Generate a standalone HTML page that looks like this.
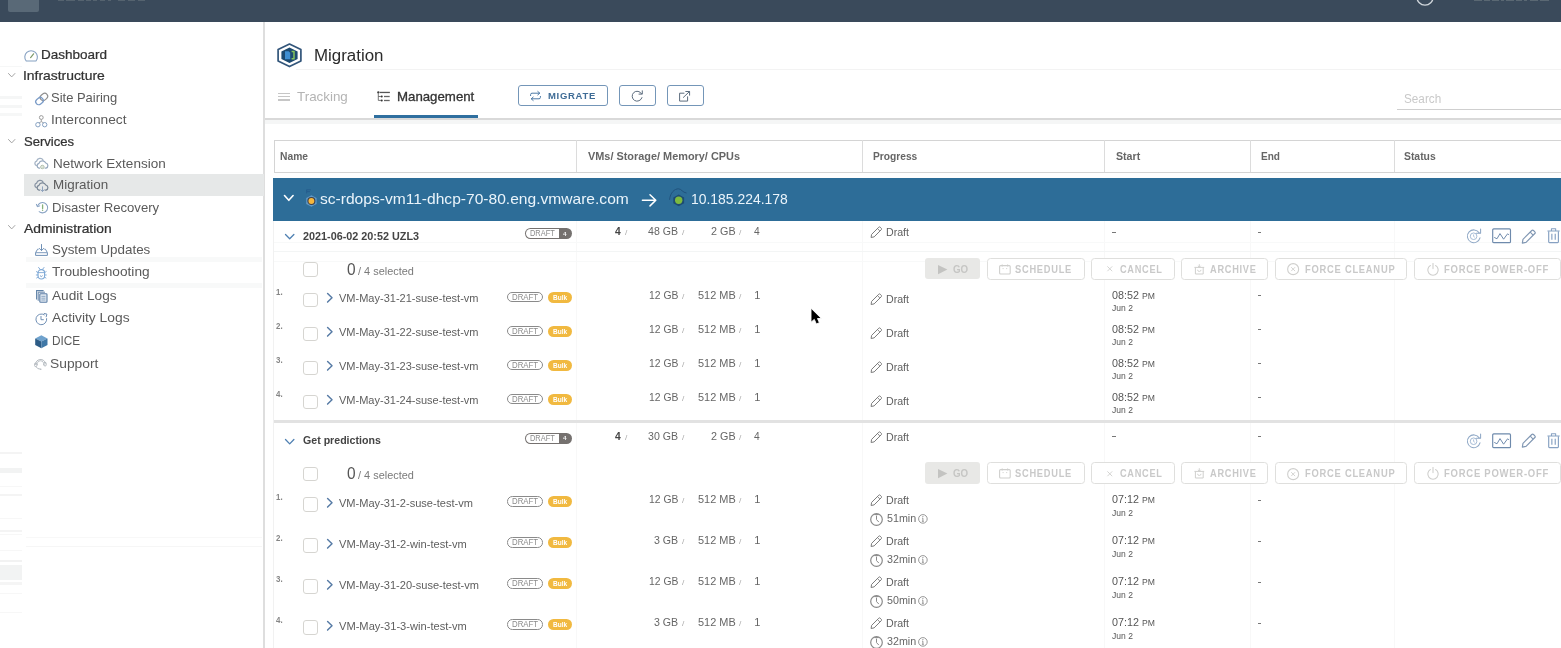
<!DOCTYPE html>
<html><head><meta charset="utf-8"><title>HCX Migration</title>
<style>
html,body{margin:0;padding:0;background:#fff;overflow:hidden;}
body{width:1561px;height:648px;overflow:hidden;position:relative;font-family:"Liberation Sans", sans-serif;}
.t{position:absolute;white-space:pre;transform-origin:0 0;font-family:"Liberation Sans", sans-serif;}
svg{overflow:visible}
#w{position:absolute;left:0;top:0;width:1561px;height:648px;overflow:hidden;will-change:transform;}
</style></head><body><div id="w">

<div style="position:absolute;left:1394px;top:221px;width:1px;height:427px;background:#f8f8f8"></div>
<div style="position:absolute;left:1250px;top:221px;width:1px;height:427px;background:#f8f8f8"></div>
<div style="position:absolute;left:1104px;top:221px;width:1px;height:427px;background:#f8f8f8"></div>
<div style="position:absolute;left:861.7px;top:221px;width:1px;height:427px;background:#f8f8f8"></div>
<div style="position:absolute;left:576px;top:221px;width:1px;height:427px;background:#f8f8f8"></div>
<div style="position:absolute;left:273.2px;top:221px;width:1px;height:427px;background:#f1f1f1"></div>
<div style="position:absolute;left:274px;top:260.6px;width:1287px;height:1px;background:#f8f9f9"></div>
<div style="position:absolute;left:274px;top:251.4px;width:1287px;height:1px;background:#f3f5f5"></div>
<div style="position:absolute;left:274px;top:241.6px;width:1287px;height:1px;background:#f8f9f9"></div>
<div style="position:absolute;left:26px;top:283.4px;width:236px;height:5.0px;background:#f8f9f9"></div>
<div style="position:absolute;left:26px;top:256.6px;width:236px;height:5.0px;background:#f8f9f9"></div>
<div style="position:absolute;left:26px;top:545.8px;width:236px;height:1.7px;background:#f6f6f6"></div>
<div style="position:absolute;left:26px;top:537.1px;width:236px;height:0.9px;background:#f8f8f8"></div>
<div style="position:absolute;left:0;top:611.5px;width:22px;height:0.9px;background:#f7f7f7"></div>
<div style="position:absolute;left:0;top:593px;width:22px;height:0.9px;background:#f7f7f7"></div>
<div style="position:absolute;left:0;top:581.8px;width:22px;height:2.9px;background:#f5f5f5"></div>
<div style="position:absolute;left:0;top:565.2px;width:22px;height:15.3px;background:#f2f3f3"></div>
<div style="position:absolute;left:0;top:559.9px;width:22px;height:2.1px;background:#f2f2f2"></div>
<div style="position:absolute;left:0;top:549.5px;width:22px;height:0.9px;background:#f7f7f7"></div>
<div style="position:absolute;left:0;top:533.8px;width:22px;height:0.9px;background:#f7f7f7"></div>
<div style="position:absolute;left:0;top:530px;width:22px;height:2.0px;background:#f4f4f4"></div>
<div style="position:absolute;left:0;top:517.7px;width:22px;height:0.9px;background:#f7f7f7"></div>
<div style="position:absolute;left:0;top:493.7px;width:22px;height:2.1px;background:#f4f4f4"></div>
<div style="position:absolute;left:0;top:485.9px;width:22px;height:0.9px;background:#f7f7f7"></div>
<div style="position:absolute;left:0;top:467.7px;width:22px;height:5.7px;background:#f2f3f3"></div>
<div style="position:absolute;left:0;top:452.4px;width:22px;height:2.0px;background:#f4f4f4"></div>
<div style="position:absolute;left:0;top:113px;width:22px;height:2.6px;background:#f6f7f7"></div>
<div style="position:absolute;left:0;top:105.4px;width:22px;height:2.6px;background:#f5f6f6"></div>
<div style="position:absolute;left:0;top:96.4px;width:22px;height:2.6px;background:#f5f6f6"></div>
<div style="position:absolute;left:0;top:65.6px;width:22px;height:1.4px;background:#f6f7f7"></div>
<div style="position:absolute;left:0px;top:0px;width:1561px;height:21.5px;background:#3a4a5b;"></div>
<div style="position:absolute;left:8px;top:0px;width:31px;height:12px;background:#596977;border-radius:0 0 2px 2px;"></div>
<div style="position:absolute;left:263px;top:21.5px;width:2px;height:627px;background:#dedede;"></div>
<div style="position:absolute;left:23.5px;top:173.8px;width:240px;height:22.4px;background:#e6e8e8;"></div>
<div style="position:absolute;left:296px;top:69px;width:1265px;height:1px;background:#f3f3f3;"></div>
<div style="position:absolute;left:374.2px;top:114.8px;width:103.5px;height:3.2px;background:#2f6f9f;"></div>
<div style="position:absolute;left:265px;top:117.6px;width:1296px;height:2.2px;background:#d9d9d9;"></div>
<div style="position:absolute;left:265px;top:119.8px;width:1296px;height:4px;background:#f5f6f6;"></div>
<div style="position:absolute;left:518px;top:84.6px;width:89.6px;height:21.2px;background:#fff;border:1px solid #7496b8;border-radius:3px;box-sizing:border-box;"></div>
<div style="position:absolute;left:619px;top:84.6px;width:36.8px;height:21.2px;background:#fff;border:1px solid #7496b8;border-radius:3px;box-sizing:border-box;"></div>
<div style="position:absolute;left:667px;top:84.6px;width:36.8px;height:21.2px;background:#fff;border:1px solid #7496b8;border-radius:3px;box-sizing:border-box;"></div>
<div style="position:absolute;left:1397px;top:109px;width:164px;height:1.2px;background:#cfcfcf;"></div>
<div style="position:absolute;left:273.8px;top:139.5px;width:1290px;height:33px;background:#fff;border:1px solid #d4d4d4;box-sizing:border-box;"></div>
<div style="position:absolute;left:576px;top:140px;width:1px;height:32px;background:#dcdcdc;"></div>
<div style="position:absolute;left:861.7px;top:140px;width:1px;height:32px;background:#dcdcdc;"></div>
<div style="position:absolute;left:1104px;top:140px;width:1px;height:32px;background:#dcdcdc;"></div>
<div style="position:absolute;left:1250px;top:140px;width:1px;height:32px;background:#dcdcdc;"></div>
<div style="position:absolute;left:1394px;top:140px;width:1px;height:32px;background:#dcdcdc;"></div>
<div style="position:absolute;left:273.3px;top:178.4px;width:1288px;height:42.6px;background:#2d6d98;"></div>
<div style="position:absolute;left:525.3px;top:228.4px;width:46.8px;height:10.9px;background:#75716f;border-radius:5.45px;"></div>
<div style="position:absolute;left:526.3px;top:229.4px;width:32.8px;height:8.9px;background:#fff;border-radius:5.45px 0 0 5.45px;"></div>
<div style="position:absolute;left:1112.2px;top:231.8px;width:3.6px;height:1px;background:#777;"></div>
<div style="position:absolute;left:1257.8px;top:231.8px;width:3.6px;height:1px;background:#777;"></div>
<div style="position:absolute;left:303.4px;top:262.3px;width:14.4px;height:14.4px;background:#fff;border:1.4px solid #d6d5d1;border-radius:3px;box-sizing:border-box;"></div>
<div style="position:absolute;left:925.1px;top:257.8px;width:54.7px;height:21.399999999999977px;background:#e8e8e6;border-radius:3px;"></div>
<div style="position:absolute;left:987.0px;top:257.5px;width:97.80000000000004px;height:21.99999999999998px;background:#fff;border:1.5px solid #dfdfdd;border-radius:3.5px;box-sizing:border-box;"></div>
<div style="position:absolute;left:1091.2px;top:257.5px;width:83.50000000000009px;height:21.99999999999998px;background:#fff;border:1.5px solid #dfdfdd;border-radius:3.5px;box-sizing:border-box;"></div>
<div style="position:absolute;left:1181.1000000000001px;top:257.5px;width:87.39999999999995px;height:21.99999999999998px;background:#fff;border:1.5px solid #dfdfdd;border-radius:3.5px;box-sizing:border-box;"></div>
<div style="position:absolute;left:1274.8px;top:257.5px;width:132.50000000000009px;height:21.99999999999998px;background:#fff;border:1.5px solid #dfdfdd;border-radius:3.5px;box-sizing:border-box;"></div>
<div style="position:absolute;left:1414.3px;top:257.5px;width:146.30000000000004px;height:21.99999999999998px;background:#fff;border:1.5px solid #dfdfdd;border-radius:3.5px;box-sizing:border-box;"></div>
<div style="position:absolute;left:303.2px;top:292.79999999999995px;width:14.4px;height:14.4px;background:#fff;border:1.4px solid #d6d5d1;border-radius:3px;box-sizing:border-box;"></div>
<div style="position:absolute;left:506.8px;top:291.79999999999995px;width:36.1px;height:10.7px;background:#fff;border:1px solid #8a8a8a;border-radius:5.35px;box-sizing:border-box;"></div>
<div style="position:absolute;left:547.9px;top:291.79999999999995px;width:24.5px;height:11.0px;background:#f1b940;border-radius:5.5px;"></div>
<div style="position:absolute;left:1257.8px;top:295.4px;width:3.6px;height:1px;background:#777;"></div>
<div style="position:absolute;left:303.2px;top:326.79999999999995px;width:14.4px;height:14.4px;background:#fff;border:1.4px solid #d6d5d1;border-radius:3px;box-sizing:border-box;"></div>
<div style="position:absolute;left:506.8px;top:325.79999999999995px;width:36.1px;height:10.7px;background:#fff;border:1px solid #8a8a8a;border-radius:5.35px;box-sizing:border-box;"></div>
<div style="position:absolute;left:547.9px;top:325.79999999999995px;width:24.5px;height:11.0px;background:#f1b940;border-radius:5.5px;"></div>
<div style="position:absolute;left:1257.8px;top:329.4px;width:3.6px;height:1px;background:#777;"></div>
<div style="position:absolute;left:303.2px;top:360.79999999999995px;width:14.4px;height:14.4px;background:#fff;border:1.4px solid #d6d5d1;border-radius:3px;box-sizing:border-box;"></div>
<div style="position:absolute;left:506.8px;top:359.79999999999995px;width:36.1px;height:10.7px;background:#fff;border:1px solid #8a8a8a;border-radius:5.35px;box-sizing:border-box;"></div>
<div style="position:absolute;left:547.9px;top:359.79999999999995px;width:24.5px;height:11.0px;background:#f1b940;border-radius:5.5px;"></div>
<div style="position:absolute;left:1257.8px;top:363.4px;width:3.6px;height:1px;background:#777;"></div>
<div style="position:absolute;left:303.2px;top:394.79999999999995px;width:14.4px;height:14.4px;background:#fff;border:1.4px solid #d6d5d1;border-radius:3px;box-sizing:border-box;"></div>
<div style="position:absolute;left:506.8px;top:393.79999999999995px;width:36.1px;height:10.7px;background:#fff;border:1px solid #8a8a8a;border-radius:5.35px;box-sizing:border-box;"></div>
<div style="position:absolute;left:547.9px;top:393.79999999999995px;width:24.5px;height:11.0px;background:#f1b940;border-radius:5.5px;"></div>
<div style="position:absolute;left:1257.8px;top:397.4px;width:3.6px;height:1px;background:#777;"></div>
<div style="position:absolute;left:274px;top:419.7px;width:1287px;height:2.9px;background:#e2e2e2;"></div>
<div style="position:absolute;left:525.3px;top:432.7px;width:46.8px;height:10.9px;background:#75716f;border-radius:5.45px;"></div>
<div style="position:absolute;left:526.3px;top:433.7px;width:32.8px;height:8.9px;background:#fff;border-radius:5.45px 0 0 5.45px;"></div>
<div style="position:absolute;left:1112.2px;top:436.09999999999997px;width:3.6px;height:1px;background:#777;"></div>
<div style="position:absolute;left:1257.8px;top:436.09999999999997px;width:3.6px;height:1px;background:#777;"></div>
<div style="position:absolute;left:303.4px;top:466.9px;width:14.4px;height:14.4px;background:#fff;border:1.4px solid #d6d5d1;border-radius:3px;box-sizing:border-box;"></div>
<div style="position:absolute;left:925.1px;top:462.2px;width:54.7px;height:21.400000000000034px;background:#e8e8e6;border-radius:3px;"></div>
<div style="position:absolute;left:987.0px;top:461.9px;width:97.80000000000004px;height:22.000000000000036px;background:#fff;border:1.5px solid #dfdfdd;border-radius:3.5px;box-sizing:border-box;"></div>
<div style="position:absolute;left:1091.2px;top:461.9px;width:83.50000000000009px;height:22.000000000000036px;background:#fff;border:1.5px solid #dfdfdd;border-radius:3.5px;box-sizing:border-box;"></div>
<div style="position:absolute;left:1181.1000000000001px;top:461.9px;width:87.39999999999995px;height:22.000000000000036px;background:#fff;border:1.5px solid #dfdfdd;border-radius:3.5px;box-sizing:border-box;"></div>
<div style="position:absolute;left:1274.8px;top:461.9px;width:132.50000000000009px;height:22.000000000000036px;background:#fff;border:1.5px solid #dfdfdd;border-radius:3.5px;box-sizing:border-box;"></div>
<div style="position:absolute;left:1414.3px;top:461.9px;width:146.30000000000004px;height:22.000000000000036px;background:#fff;border:1.5px solid #dfdfdd;border-radius:3.5px;box-sizing:border-box;"></div>
<div style="position:absolute;left:303.2px;top:497.4px;width:14.4px;height:14.4px;background:#fff;border:1.4px solid #d6d5d1;border-radius:3px;box-sizing:border-box;"></div>
<div style="position:absolute;left:506.8px;top:496.4px;width:36.1px;height:10.7px;background:#fff;border:1px solid #8a8a8a;border-radius:5.35px;box-sizing:border-box;"></div>
<div style="position:absolute;left:547.9px;top:496.4px;width:24.5px;height:11.0px;background:#f1b940;border-radius:5.5px;"></div>
<div style="position:absolute;left:1257.8px;top:500.0px;width:3.6px;height:1px;background:#777;"></div>
<div style="position:absolute;left:303.2px;top:538.4px;width:14.4px;height:14.4px;background:#fff;border:1.4px solid #d6d5d1;border-radius:3px;box-sizing:border-box;"></div>
<div style="position:absolute;left:506.8px;top:537.4px;width:36.1px;height:10.7px;background:#fff;border:1px solid #8a8a8a;border-radius:5.35px;box-sizing:border-box;"></div>
<div style="position:absolute;left:547.9px;top:537.4px;width:24.5px;height:11.0px;background:#f1b940;border-radius:5.5px;"></div>
<div style="position:absolute;left:1257.8px;top:541.0px;width:3.6px;height:1px;background:#777;"></div>
<div style="position:absolute;left:303.2px;top:579.4px;width:14.4px;height:14.4px;background:#fff;border:1.4px solid #d6d5d1;border-radius:3px;box-sizing:border-box;"></div>
<div style="position:absolute;left:506.8px;top:578.4px;width:36.1px;height:10.7px;background:#fff;border:1px solid #8a8a8a;border-radius:5.35px;box-sizing:border-box;"></div>
<div style="position:absolute;left:547.9px;top:578.4px;width:24.5px;height:11.0px;background:#f1b940;border-radius:5.5px;"></div>
<div style="position:absolute;left:1257.8px;top:582.0px;width:3.6px;height:1px;background:#777;"></div>
<div style="position:absolute;left:303.2px;top:620.4px;width:14.4px;height:14.4px;background:#fff;border:1.4px solid #d6d5d1;border-radius:3px;box-sizing:border-box;"></div>
<div style="position:absolute;left:506.8px;top:619.4px;width:36.1px;height:10.7px;background:#fff;border:1px solid #8a8a8a;border-radius:5.35px;box-sizing:border-box;"></div>
<div style="position:absolute;left:547.9px;top:619.4px;width:24.5px;height:11.0px;background:#f1b940;border-radius:5.5px;"></div>
<div style="position:absolute;left:1257.8px;top:623.0px;width:3.6px;height:1px;background:#777;"></div>
<svg style="position:absolute;left:8.2px;top:73.2px;" width="7.4" height="4.6" viewBox="0 0 7.4 4.6" fill="none"><path d="M0.5 0.5 L3.7 3.8999999999999995 L6.9 0.5" stroke="#a3a3a3" stroke-width="1.0" stroke-linecap="round" stroke-linejoin="round"/></svg>
<svg style="position:absolute;left:8.2px;top:138.9px;" width="7.4" height="4.6" viewBox="0 0 7.4 4.6" fill="none"><path d="M0.5 0.5 L3.7 3.8999999999999995 L6.9 0.5" stroke="#a3a3a3" stroke-width="1.0" stroke-linecap="round" stroke-linejoin="round"/></svg>
<svg style="position:absolute;left:8.2px;top:225.4px;" width="7.4" height="4.6" viewBox="0 0 7.4 4.6" fill="none"><path d="M0.5 0.5 L3.7 3.8999999999999995 L6.9 0.5" stroke="#a3a3a3" stroke-width="1.0" stroke-linecap="round" stroke-linejoin="round"/></svg>
<svg style="position:absolute;left:24px;top:49.5px;" width="14.2" height="11.8" viewBox="0 0 14.2 11.8" fill="none"><path d="M2.2 11 A6.3 6.3 0 1 1 12 11 Z" stroke="#86a1c2" stroke-width="1.1" stroke-linejoin="round"/><path d="M6.6 7.6 L9.6 3.8" stroke="#7d9a6a" stroke-width="1.2" stroke-linecap="round"/></svg>
<svg style="position:absolute;left:34.6px;top:92.9px;" width="13.3" height="12" viewBox="0 0 13.3 12" fill="none"><rect x="4.9" y="0.9" width="8" height="6" rx="3" transform="rotate(-40 8.9 3.9)" stroke="#8d8d8d" stroke-width="1.1"/><rect x="0.5" y="5.1" width="8" height="6" rx="3" transform="rotate(-40 4.5 8.1)" stroke="#7b9cc8" stroke-width="1.25"/></svg>
<svg style="position:absolute;left:35px;top:114.7px;" width="12.6" height="12.5" viewBox="0 0 12.6 12.5" fill="none"><circle cx="6.3" cy="2.5" r="1.9" stroke="#9a9a9a" stroke-width="1"/><path d="M6.3 4.4 V6.6 M6.3 6.6 L4 8 M6.3 6.6 L8.6 8" stroke="#9a9a9a" stroke-width=".9"/><circle cx="2.9" cy="9.7" r="2.2" stroke="#86a1c2" stroke-width="1"/><circle cx="9.7" cy="9.7" r="2.2" stroke="#86a1c2" stroke-width="1"/></svg>
<svg style="position:absolute;left:34.2px;top:158.4px;" width="14.8" height="12" viewBox="0 0 14.8 12" fill="none"><path d="M2.4 7.6 A2.3 2.3 0 0 1 2.6 3.2 A3.6 3.6 0 0 1 9.2 2.2" stroke="#a3b2c4" stroke-width="1.25" stroke-linecap="round"/><path d="M5.6 10.2 H5 A2.5 2.5 0 0 1 4.9 5.4 A3.7 3.7 0 0 1 11.8 5 A2.7 2.7 0 0 1 12 10.2 H11.2" stroke="#98aabf" stroke-width="1.25" stroke-linecap="round"/><circle cx="8.4" cy="9" r="1.7" stroke="#a7b7a2" stroke-width="1"/><circle cx="8.4" cy="9" r=".5" fill="#9ab58a"/></svg>
<svg style="position:absolute;left:34.1px;top:180.0px;" width="14.8" height="12" viewBox="0 0 14.8 12" fill="none"><path d="M2.4 7.6 A2.3 2.3 0 0 1 2.6 3.2 A3.6 3.6 0 0 1 9.2 2.2" stroke="#8793a3" stroke-width="1.25" stroke-linecap="round"/><path d="M5.6 10.2 H5 A2.5 2.5 0 0 1 4.9 5.4 A3.7 3.7 0 0 1 11.8 5 A2.7 2.7 0 0 1 12 10.2 H11.2" stroke="#7b8897" stroke-width="1.25" stroke-linecap="round"/><path d="M8.5 6.8 V11.3 M6.9 9.8 L8.5 11.5 L10.1 9.8" stroke="#8ea2bd" stroke-width="1" stroke-linecap="round" stroke-linejoin="round"/></svg>
<svg style="position:absolute;left:35.7px;top:201.3px;" width="12.4" height="12.8" viewBox="0 0 12.4 12.8" fill="none"><path d="M1.5 5.2 A5.2 5.2 0 1 1 3.2 10.7" stroke="#86a1c2" stroke-width="1.05" stroke-linecap="round"/><path d="M0.4 3.3 L1.3 5.7 L3.7 4.9" stroke="#86a1c2" stroke-width="1" stroke-linecap="round" stroke-linejoin="round"/><path d="M6.6 4 V7.4" stroke="#86b07a" stroke-width="1.3" stroke-linecap="round"/><circle cx="6.6" cy="9.2" r=".7" fill="#86b07a"/></svg>
<svg style="position:absolute;left:34.9px;top:244.3px;" width="13" height="12" viewBox="0 0 13 12" fill="none"><path d="M6.5 0.5 V6.4 M4.3 4.4 L6.5 6.6 L8.7 4.4" stroke="#6f90b6" stroke-width="1" stroke-linecap="round" stroke-linejoin="round"/><path d="M3.6 5.2 H2.6 L0.6 8.6 V11.4 H12.4 V8.6 L10.4 5.2 H9.4" stroke="#6f90b6" stroke-width="1" stroke-linejoin="round"/><path d="M0.8 8.7 H12.2" stroke="#6f90b6" stroke-width=".9"/></svg>
<svg style="position:absolute;left:36.2px;top:267.3px;" width="10.6" height="12.6" viewBox="0 0 10.6 12.6" fill="none"><path d="M2.6 0.5 L4 2.2 M8 0.5 L6.6 2.2" stroke="#7fa9d6" stroke-width="1" stroke-linecap="round"/><rect x="2" y="2.6" width="6.6" height="9.4" rx="3.2" stroke="#7fa9d6" stroke-width="1.1"/><path d="M2 5.6 H8.6 M0.4 4.6 L2 5.6 M10.2 4.6 L8.6 5.6 M0.3 8 H2 M8.6 8 H10.3 M0.6 11 L2.2 10 M10 11 L8.4 10" stroke="#7fa9d6" stroke-width=".9" stroke-linecap="round"/><path d="M4 8.6 L5.3 9.6 L6.6 8.6" stroke="#6c94c2" stroke-width=".9"/></svg>
<svg style="position:absolute;left:35.8px;top:290px;" width="11.6" height="12.8" viewBox="0 0 11.6 12.8" fill="none"><path d="M0.6 9.4 V0.6 H7.6" stroke="#6183a8" stroke-width="1.1"/><path d="M2.2 10.8 V2.2 H9" stroke="#6183a8" stroke-width="1"/><rect x="3.8" y="3.8" width="7.2" height="8.4" rx=".8" fill="#dfe7f0" stroke="#5d7fa6" stroke-width="1.1"/><path d="M5.4 6.4 H9.4 M5.4 8.2 H9.4 M5.4 10 H9.4" stroke="#7e9bbb" stroke-width=".8"/></svg>
<svg style="position:absolute;left:35.1px;top:312.7px;" width="12.9" height="12.8" viewBox="0 0 12.9 12.8" fill="none"><path d="M9.3 1.8 A5.4 5.4 0 1 0 11.7 5.6" stroke="#6f8fb4" stroke-width="1" stroke-linecap="round"/><path d="M9.2 0.5 L11.9 1.1 L11.2 3.8" stroke="#6f8fb4" stroke-width="1" stroke-linecap="round" stroke-linejoin="round"/><path d="M6 3.4 V6.7 H8.4" stroke="#6f8fb4" stroke-width="1" stroke-linecap="round" stroke-linejoin="round"/></svg>
<svg style="position:absolute;left:34.9px;top:334.7px;" width="12.7" height="13.5" viewBox="0 0 12.7 13.5" fill="none"><path d="M6.35 0.2 L12.5 3.4 L6.35 6.6 L0.2 3.4 Z" fill="#6fa2cd"/><path d="M0.2 3.4 L6.35 6.6 V13.3 L0.2 10.1 Z" fill="#2d5c86"/><path d="M12.5 3.4 L6.35 6.6 V13.3 L12.5 10.1 Z" fill="#3f77a6"/></svg>
<svg style="position:absolute;left:34px;top:357.3px;" width="12.9" height="12.9" viewBox="0 0 12.9 12.9" fill="none"><path d="M1.6 7.4 A5 5 0 0 1 11.4 6.2" stroke="#aeb4ba" stroke-width="1" stroke-linecap="round"/><path d="M3.4 8.2 A3.3 3.3 0 1 1 9.6 8.2" stroke="#b9bec4" stroke-width=".9"/><rect x="0.6" y="6" width="2.2" height="3.6" rx="1" stroke="#aeb4ba" stroke-width=".9"/><rect x="10" y="5.4" width="2.2" height="3.6" rx="1" stroke="#aeb4ba" stroke-width=".9"/><path d="M2 9.8 A4.6 4.6 0 0 0 6.2 12.2" stroke="#aeb4ba" stroke-width=".9" stroke-linecap="round"/><circle cx="6.8" cy="12.2" r=".7" fill="#aeb4ba"/></svg>
<svg style="position:absolute;left:1415.5px;top:-12.2px;" width="18" height="18" viewBox="0 0 18 18" fill="none"><circle cx="9" cy="9" r="8.1" stroke="#d0d6db" stroke-width="1.4"/></svg>
<div style="position:absolute;left:58px;top:0px;width:6px;height:1.2px;background:#55636f;"></div>
<div style="position:absolute;left:66px;top:0px;width:9px;height:1.2px;background:#55636f;"></div>
<div style="position:absolute;left:78px;top:0px;width:6px;height:1.2px;background:#55636f;"></div>
<div style="position:absolute;left:86px;top:0px;width:5px;height:1.2px;background:#55636f;"></div>
<div style="position:absolute;left:93px;top:0px;width:4px;height:1.2px;background:#55636f;"></div>
<div style="position:absolute;left:100px;top:0px;width:5px;height:1.2px;background:#55636f;"></div>
<div style="position:absolute;left:108px;top:0px;width:3px;height:1.2px;background:#55636f;"></div>
<div style="position:absolute;left:118px;top:0px;width:7px;height:1.2px;background:#55636f;"></div>
<div style="position:absolute;left:128px;top:0px;width:7px;height:1.2px;background:#55636f;"></div>
<div style="position:absolute;left:138px;top:0px;width:7px;height:1.2px;background:#55636f;"></div>
<div style="position:absolute;left:1474px;top:0px;width:8px;height:1.3px;background:#5a6873;"></div>
<div style="position:absolute;left:1484px;top:0px;width:6px;height:1.3px;background:#5a6873;"></div>
<div style="position:absolute;left:1492px;top:0px;width:7px;height:1.3px;background:#5a6873;"></div>
<div style="position:absolute;left:1501px;top:0px;width:3px;height:1.3px;background:#5a6873;"></div>
<div style="position:absolute;left:1506px;top:0px;width:8px;height:1.3px;background:#5a6873;"></div>
<div style="position:absolute;left:1516px;top:0px;width:6px;height:1.3px;background:#5a6873;"></div>
<div style="position:absolute;left:1524px;top:0px;width:3px;height:1.3px;background:#5a6873;"></div>
<div style="position:absolute;left:1530px;top:0px;width:8px;height:1.3px;background:#5a6873;"></div>
<div style="position:absolute;left:1540px;top:0px;width:9px;height:1.3px;background:#5a6873;"></div>
<svg style="position:absolute;left:277px;top:43.4px;" width="25" height="24.6" viewBox="0 0 25 24.6" fill="none"><path d="M12.5 1 L23.9 6.6 V18 L12.5 23.6 L1.1 18 V6.6 Z" stroke="#32557a" stroke-width="1.7" stroke-linejoin="round" fill="#fff"/><path d="M12.5 4.6 L20.6 8.6 V16 L12.5 20 L4.4 16 V8.6 Z" fill="#1d4a70"/><path d="M8 8.2 H11.6 L13.2 9.8 V16.2 H8 Z" fill="#3f8fd2"/><path d="M14.6 8.6 H17 V15.8 H14.6" stroke="#84c45c" stroke-width="1.5" fill="none"/></svg>
<div style="position:absolute;left:278.3px;top:92.6px;width:11.6px;height:1.5px;background:#c6c6c6;"></div>
<div style="position:absolute;left:278.3px;top:95.9px;width:11.6px;height:1.5px;background:#c6c6c6;"></div>
<div style="position:absolute;left:278.3px;top:99.2px;width:11.6px;height:1.5px;background:#c6c6c6;"></div>
<svg style="position:absolute;left:377.3px;top:91.2px;" width="13.2" height="10.8" viewBox="0 0 13.2 10.8" fill="none"><circle cx="1.3" cy="1.4" r="1.15" fill="#3c3c3c"/><rect x="2.7" y="0.8" width="10.2" height="1.3" fill="#555"/><path d="M1.3 2.3 V9.4 H3.8 M1.3 5.5 H3.8" stroke="#555" stroke-width=".8"/><circle cx="4.7" cy="5.5" r="1.05" fill="#333"/><circle cx="4.7" cy="9.5" r="1.05" fill="#333"/><rect x="7" y="4.85" width="5.7" height="1.3" fill="#666"/><rect x="7" y="8.85" width="5.7" height="1.3" fill="#666"/></svg>
<svg style="position:absolute;left:530.2px;top:91.2px;" width="11" height="10" viewBox="0 0 11 10" fill="none"><path d="M0.6 4.6 V3.6 A1.4 1.4 0 0 1 2 2.2 H9.6 M7.8 0.5 L9.8 2.2 L7.8 3.9" stroke="#4d7aa6" stroke-width="1" stroke-linecap="round" stroke-linejoin="round"/><path d="M10.4 5.4 V6.4 A1.4 1.4 0 0 1 9 7.8 H1.4 M3.2 6.1 L1.2 7.8 L3.2 9.5" stroke="#4d7aa6" stroke-width="1" stroke-linecap="round" stroke-linejoin="round"/></svg>
<svg style="position:absolute;left:630.8px;top:90.2px;" width="12.2" height="11.8" viewBox="0 0 12.2 11.8" fill="none"><path d="M10.6 3.8 A5 5 0 1 0 11 7.6" stroke="#5b6b7c" stroke-width="1" stroke-linecap="round"/><path d="M11.3 0.8 V4.1 H8" stroke="#5b6b7c" stroke-width="1" stroke-linecap="round" stroke-linejoin="round"/></svg>
<svg style="position:absolute;left:678.9px;top:91px;" width="11.3" height="10.7" viewBox="0 0 11.3 10.7" fill="none"><path d="M5.4 2.2 H0.6 V10.1 H8.6 V5.4" stroke="#5b6b7c" stroke-width="1" stroke-linejoin="round"/><path d="M4.4 6.4 L10.4 0.6 M6.8 0.5 H10.6 V4.2" stroke="#5b6b7c" stroke-width="1" stroke-linecap="round" stroke-linejoin="round"/></svg>
<svg style="position:absolute;left:283.8px;top:194.9px;" width="9.6" height="6" viewBox="0 0 9.6 6" fill="none"><path d="M0.5 0.5 L4.8 5.3 L9.1 0.5" stroke="#fff" stroke-width="1.6" stroke-linecap="round" stroke-linejoin="round"/></svg>
<svg style="position:absolute;left:305.6px;top:188.8px;" width="11" height="18" viewBox="0 0 11 18" fill="none"><path d="M0.6 4.4 V0.8 H4.8 M1 2.6 H4" stroke="#23588a" stroke-width=".8"/><path d="M5.4 6.2 L10.6 9.1 V14.9 L5.4 17.8 L0.2 14.9 V9.1 Z" fill="#5f98c6"/><circle cx="5.4" cy="12" r="3.5" fill="#f6b73c" stroke="#3a3f4d" stroke-width="1.1"/></svg>
<svg style="position:absolute;left:641.8px;top:193.6px;" width="14.6" height="12.6" viewBox="0 0 14.6 12.6" fill="none"><path d="M0.4 6.3 H13.6 M8 0.7 L13.8 6.3 L8 11.9" stroke="#fff" stroke-width="1.5" stroke-linecap="round" stroke-linejoin="round"/></svg>
<svg style="position:absolute;left:668.6px;top:188.4px;" width="18" height="18.4" viewBox="0 0 18 18.4" fill="none"><path d="M0.6 11.4 C1.2 4.6 5.6 0.8 9.4 0.8 C12.6 0.8 13.4 4.6 17.2 5" stroke="#1f4f79" stroke-width=".9" stroke-linecap="round"/><path d="M9.7 6.4 L15.1 9.4 V15.2 L9.7 18.2 L4.3 15.2 V9.4 Z" fill="#1d4b72"/><circle cx="9.7" cy="12.3" r="3.7" fill="#7dba3f"/></svg>
<svg style="position:absolute;left:285.0px;top:234.2px;" width="9.4" height="5.4" viewBox="0 0 9.4 5.4" fill="none"><path d="M0.5 0.5 L4.7 4.7 L8.9 0.5" stroke="#4f80b2" stroke-width="1.3" stroke-linecap="round" stroke-linejoin="round"/></svg>
<svg style="position:absolute;left:869.9px;top:226.3px;" width="12.4" height="12.4" viewBox="0 0 12.4 12.4" fill="none"><path d="M1.1 11.5 L1.6 8.4 L8.8 1.2 A1 1 0 0 1 10.2 1.2 L11.3 2.3 A1 1 0 0 1 11.3 3.7 L4.1 10.9 Z" stroke="#7a7a7a" stroke-width="1" stroke-linejoin="round"/><path d="M7.5 2.6 L9.9 5" stroke="#7a7a7a" stroke-width="0.9"/></svg>
<svg style="position:absolute;left:1466px;top:228.3px;" width="15.6" height="15.7" viewBox="0 0 15.6 15.2" fill="none"><path d="M13.2 4.6 A6.4 6.4 0 1 0 14 9.6" stroke="#8fa8c6" stroke-width="1.05" stroke-linecap="round"/><path d="M14.6 0.8 V5 H10.4" stroke="#8fa8c6" stroke-width="1.05" stroke-linecap="round" stroke-linejoin="round"/><circle cx="7.6" cy="8" r="3.3" stroke="#9bb3d0" stroke-width=".9"/><path d="M7.6 6.2 V8.2 L8.8 9" stroke="#9bb3d0" stroke-width=".8"/></svg>
<svg style="position:absolute;left:1491.6px;top:228.4px;" width="19.2" height="15.6" viewBox="0 0 19.2 15.2" fill="none"><rect x="0.7" y="0.7" width="17.8" height="13.8" rx="1" stroke="#6e8aac" stroke-width="1.15"/><path d="M2.6 9.4 L5 10.6 L8 5.4 L11.6 11 L15.6 5.6 L16.6 6.4" stroke="#6e8aac" stroke-width="1" stroke-linejoin="round" stroke-linecap="round"/></svg>
<svg style="position:absolute;left:1520.9px;top:228.5px;" width="15.2" height="15.2" viewBox="0 0 12.4 12.4" fill="none"><path d="M1.1 11.5 L1.6 8.4 L8.8 1.2 A1 1 0 0 1 10.2 1.2 L11.3 2.3 A1 1 0 0 1 11.3 3.7 L4.1 10.9 Z" stroke="#8097b3" stroke-width="0.95" stroke-linejoin="round"/><path d="M7.5 2.6 L9.9 5" stroke="#8097b3" stroke-width="0.855"/></svg>
<svg style="position:absolute;left:1546.9px;top:228.4px;" width="13.1" height="15.2" viewBox="0 0 12.4 14.4" fill="none"><path d="M0.4 2.8 H12 M4.2 2.6 V0.8 H8.2 V2.6" stroke="#86a1c2" stroke-width="1" stroke-linejoin="round"/><path d="M1.6 3 V13 A.8 .8 0 0 0 2.4 13.8 H10 A.8 .8 0 0 0 10.8 13 V3" stroke="#86a1c2" stroke-width="1.1"/><path d="M4.6 5.4 V11.2 M7.8 5.4 V11.2" stroke="#86a1c2" stroke-width="1.1"/></svg>
<svg style="position:absolute;left:938.4px;top:264.59999999999997px;" width="9.6" height="9.2" viewBox="0 0 9.6 9.2" fill="none"><path d="M0 0 L9.4 4.6 L0 9.2 Z" fill="#c3c3c1"/></svg>
<svg style="position:absolute;left:999.2px;top:264.0px;" width="11.8" height="10.6" viewBox="0 0 11.8 10.6" fill="none"><rect x="0.6" y="1.6" width="10.6" height="8.4" rx="1" stroke="#cfcfcd" stroke-width="1.1"/><path d="M3.2 0.4 V2.4 M8.6 0.4 V2.4" stroke="#cfcfcd" stroke-width="1.1"/><path d="M3.6 4.6 H4.6 M7.2 4.6 H8.2" stroke="#cfcfcd" stroke-width="1"/></svg>
<svg style="position:absolute;left:1106.8px;top:266.3px;" width="5.6" height="5.6" viewBox="0 0 5.6 5.6" fill="none"><path d="M0.4 0.4 L5.2 5.2 M5.2 0.4 L0.4 5.2" stroke="#cfcfcd" stroke-width=".9"/></svg>
<svg style="position:absolute;left:1194.2px;top:264.0px;" width="10.6" height="10.6" viewBox="0 0 10.6 10.6" fill="none"><path d="M0.4 3.4 H10.2 M1.4 3.6 V10 H9.2 V3.6" stroke="#cfcfcd" stroke-width="1"/><path d="M5.3 0.2 V3 M3.9 1.8 L5.3 3.2 L6.7 1.8" stroke="#cfcfcd" stroke-width=".9"/><path d="M3.6 5.8 A1.7 1.7 0 0 0 7 5.8" stroke="#cfcfcd" stroke-width=".9"/></svg>
<svg style="position:absolute;left:1287.4px;top:263.09999999999997px;" width="12.3" height="12.3" viewBox="0 0 12.3 12.3" fill="none"><circle cx="6.15" cy="6.15" r="5.5" stroke="#cfcfcd" stroke-width="1.1"/><path d="M4.2 4.2 L8.1 8.1 M8.1 4.2 L4.2 8.1" stroke="#cfcfcd" stroke-width=".9"/></svg>
<svg style="position:absolute;left:1426.9px;top:263.0px;" width="12" height="12.4" viewBox="0 0 12 12.4" fill="none"><path d="M3.4 2.6 A5.2 5.2 0 1 0 8.6 2.6" stroke="#cfcfcd" stroke-width="1.1" stroke-linecap="round"/><path d="M6 0.5 V5.6" stroke="#cfcfcd" stroke-width="1.1" stroke-linecap="round"/></svg>
<svg style="position:absolute;left:327.2px;top:292.9px;" width="5.7" height="9.6" viewBox="0 0 5.7 9.6" fill="none"><path d="M0.6 0.5 L5.0 4.8 L0.6 9.1" stroke="#587ca6" stroke-width="1.5" stroke-linecap="round" stroke-linejoin="round"/></svg>
<svg style="position:absolute;left:869.9px;top:293.4px;" width="12.4" height="12.4" viewBox="0 0 12.4 12.4" fill="none"><path d="M1.1 11.5 L1.6 8.4 L8.8 1.2 A1 1 0 0 1 10.2 1.2 L11.3 2.3 A1 1 0 0 1 11.3 3.7 L4.1 10.9 Z" stroke="#7a7a7a" stroke-width="1" stroke-linejoin="round"/><path d="M7.5 2.6 L9.9 5" stroke="#7a7a7a" stroke-width="0.9"/></svg>
<svg style="position:absolute;left:327.2px;top:326.9px;" width="5.7" height="9.6" viewBox="0 0 5.7 9.6" fill="none"><path d="M0.6 0.5 L5.0 4.8 L0.6 9.1" stroke="#587ca6" stroke-width="1.5" stroke-linecap="round" stroke-linejoin="round"/></svg>
<svg style="position:absolute;left:869.9px;top:327.4px;" width="12.4" height="12.4" viewBox="0 0 12.4 12.4" fill="none"><path d="M1.1 11.5 L1.6 8.4 L8.8 1.2 A1 1 0 0 1 10.2 1.2 L11.3 2.3 A1 1 0 0 1 11.3 3.7 L4.1 10.9 Z" stroke="#7a7a7a" stroke-width="1" stroke-linejoin="round"/><path d="M7.5 2.6 L9.9 5" stroke="#7a7a7a" stroke-width="0.9"/></svg>
<svg style="position:absolute;left:327.2px;top:360.9px;" width="5.7" height="9.6" viewBox="0 0 5.7 9.6" fill="none"><path d="M0.6 0.5 L5.0 4.8 L0.6 9.1" stroke="#587ca6" stroke-width="1.5" stroke-linecap="round" stroke-linejoin="round"/></svg>
<svg style="position:absolute;left:869.9px;top:361.4px;" width="12.4" height="12.4" viewBox="0 0 12.4 12.4" fill="none"><path d="M1.1 11.5 L1.6 8.4 L8.8 1.2 A1 1 0 0 1 10.2 1.2 L11.3 2.3 A1 1 0 0 1 11.3 3.7 L4.1 10.9 Z" stroke="#7a7a7a" stroke-width="1" stroke-linejoin="round"/><path d="M7.5 2.6 L9.9 5" stroke="#7a7a7a" stroke-width="0.9"/></svg>
<svg style="position:absolute;left:327.2px;top:394.9px;" width="5.7" height="9.6" viewBox="0 0 5.7 9.6" fill="none"><path d="M0.6 0.5 L5.0 4.8 L0.6 9.1" stroke="#587ca6" stroke-width="1.5" stroke-linecap="round" stroke-linejoin="round"/></svg>
<svg style="position:absolute;left:869.9px;top:395.4px;" width="12.4" height="12.4" viewBox="0 0 12.4 12.4" fill="none"><path d="M1.1 11.5 L1.6 8.4 L8.8 1.2 A1 1 0 0 1 10.2 1.2 L11.3 2.3 A1 1 0 0 1 11.3 3.7 L4.1 10.9 Z" stroke="#7a7a7a" stroke-width="1" stroke-linejoin="round"/><path d="M7.5 2.6 L9.9 5" stroke="#7a7a7a" stroke-width="0.9"/></svg>
<svg style="position:absolute;left:285.4px;top:438.6px;" width="9.4" height="5.6" viewBox="0 0 9.4 5.6" fill="none"><path d="M0.5 0.5 L4.7 4.8999999999999995 L8.9 0.5" stroke="#4f80b2" stroke-width="1.3" stroke-linecap="round" stroke-linejoin="round"/></svg>
<svg style="position:absolute;left:869.9px;top:430.6px;" width="12.4" height="12.4" viewBox="0 0 12.4 12.4" fill="none"><path d="M1.1 11.5 L1.6 8.4 L8.8 1.2 A1 1 0 0 1 10.2 1.2 L11.3 2.3 A1 1 0 0 1 11.3 3.7 L4.1 10.9 Z" stroke="#7a7a7a" stroke-width="1" stroke-linejoin="round"/><path d="M7.5 2.6 L9.9 5" stroke="#7a7a7a" stroke-width="0.9"/></svg>
<svg style="position:absolute;left:1466px;top:432.7px;" width="15.6" height="15.7" viewBox="0 0 15.6 15.2" fill="none"><path d="M13.2 4.6 A6.4 6.4 0 1 0 14 9.6" stroke="#8fa8c6" stroke-width="1.05" stroke-linecap="round"/><path d="M14.6 0.8 V5 H10.4" stroke="#8fa8c6" stroke-width="1.05" stroke-linecap="round" stroke-linejoin="round"/><circle cx="7.6" cy="8" r="3.3" stroke="#9bb3d0" stroke-width=".9"/><path d="M7.6 6.2 V8.2 L8.8 9" stroke="#9bb3d0" stroke-width=".8"/></svg>
<svg style="position:absolute;left:1491.6px;top:432.8px;" width="19.2" height="15.6" viewBox="0 0 19.2 15.2" fill="none"><rect x="0.7" y="0.7" width="17.8" height="13.8" rx="1" stroke="#6e8aac" stroke-width="1.15"/><path d="M2.6 9.4 L5 10.6 L8 5.4 L11.6 11 L15.6 5.6 L16.6 6.4" stroke="#6e8aac" stroke-width="1" stroke-linejoin="round" stroke-linecap="round"/></svg>
<svg style="position:absolute;left:1520.9px;top:432.9px;" width="15.2" height="15.2" viewBox="0 0 12.4 12.4" fill="none"><path d="M1.1 11.5 L1.6 8.4 L8.8 1.2 A1 1 0 0 1 10.2 1.2 L11.3 2.3 A1 1 0 0 1 11.3 3.7 L4.1 10.9 Z" stroke="#8097b3" stroke-width="0.95" stroke-linejoin="round"/><path d="M7.5 2.6 L9.9 5" stroke="#8097b3" stroke-width="0.855"/></svg>
<svg style="position:absolute;left:1546.9px;top:432.8px;" width="13.1" height="15.2" viewBox="0 0 12.4 14.4" fill="none"><path d="M0.4 2.8 H12 M4.2 2.6 V0.8 H8.2 V2.6" stroke="#86a1c2" stroke-width="1" stroke-linejoin="round"/><path d="M1.6 3 V13 A.8 .8 0 0 0 2.4 13.8 H10 A.8 .8 0 0 0 10.8 13 V3" stroke="#86a1c2" stroke-width="1.1"/><path d="M4.6 5.4 V11.2 M7.8 5.4 V11.2" stroke="#86a1c2" stroke-width="1.1"/></svg>
<svg style="position:absolute;left:938.4px;top:468.99999999999994px;" width="9.6" height="9.2" viewBox="0 0 9.6 9.2" fill="none"><path d="M0 0 L9.4 4.6 L0 9.2 Z" fill="#c3c3c1"/></svg>
<svg style="position:absolute;left:999.2px;top:468.4px;" width="11.8" height="10.6" viewBox="0 0 11.8 10.6" fill="none"><rect x="0.6" y="1.6" width="10.6" height="8.4" rx="1" stroke="#cfcfcd" stroke-width="1.1"/><path d="M3.2 0.4 V2.4 M8.6 0.4 V2.4" stroke="#cfcfcd" stroke-width="1.1"/><path d="M3.6 4.6 H4.6 M7.2 4.6 H8.2" stroke="#cfcfcd" stroke-width="1"/></svg>
<svg style="position:absolute;left:1106.8px;top:470.7px;" width="5.6" height="5.6" viewBox="0 0 5.6 5.6" fill="none"><path d="M0.4 0.4 L5.2 5.2 M5.2 0.4 L0.4 5.2" stroke="#cfcfcd" stroke-width=".9"/></svg>
<svg style="position:absolute;left:1194.2px;top:468.4px;" width="10.6" height="10.6" viewBox="0 0 10.6 10.6" fill="none"><path d="M0.4 3.4 H10.2 M1.4 3.6 V10 H9.2 V3.6" stroke="#cfcfcd" stroke-width="1"/><path d="M5.3 0.2 V3 M3.9 1.8 L5.3 3.2 L6.7 1.8" stroke="#cfcfcd" stroke-width=".9"/><path d="M3.6 5.8 A1.7 1.7 0 0 0 7 5.8" stroke="#cfcfcd" stroke-width=".9"/></svg>
<svg style="position:absolute;left:1287.4px;top:467.49999999999994px;" width="12.3" height="12.3" viewBox="0 0 12.3 12.3" fill="none"><circle cx="6.15" cy="6.15" r="5.5" stroke="#cfcfcd" stroke-width="1.1"/><path d="M4.2 4.2 L8.1 8.1 M8.1 4.2 L4.2 8.1" stroke="#cfcfcd" stroke-width=".9"/></svg>
<svg style="position:absolute;left:1426.9px;top:467.4px;" width="12" height="12.4" viewBox="0 0 12 12.4" fill="none"><path d="M3.4 2.6 A5.2 5.2 0 1 0 8.6 2.6" stroke="#cfcfcd" stroke-width="1.1" stroke-linecap="round"/><path d="M6 0.5 V5.6" stroke="#cfcfcd" stroke-width="1.1" stroke-linecap="round"/></svg>
<svg style="position:absolute;left:327.2px;top:497.8px;" width="5.7" height="9.6" viewBox="0 0 5.7 9.6" fill="none"><path d="M0.6 0.5 L5.0 4.8 L0.6 9.1" stroke="#587ca6" stroke-width="1.5" stroke-linecap="round" stroke-linejoin="round"/></svg>
<svg style="position:absolute;left:869.9px;top:493.7px;" width="12.4" height="12.4" viewBox="0 0 12.4 12.4" fill="none"><path d="M1.1 11.5 L1.6 8.4 L8.8 1.2 A1 1 0 0 1 10.2 1.2 L11.3 2.3 A1 1 0 0 1 11.3 3.7 L4.1 10.9 Z" stroke="#7a7a7a" stroke-width="1" stroke-linejoin="round"/><path d="M7.5 2.6 L9.9 5" stroke="#7a7a7a" stroke-width="0.9"/></svg>
<svg style="position:absolute;left:869.9px;top:512.8px;" width="13" height="13" viewBox="0 0 13 13" fill="none"><circle cx="6.5" cy="6.5" r="5.8" stroke="#8a8a8a" stroke-width="1.2"/><path d="M6.5 3 V6.6 L8.6 8.8" stroke="#8a8a8a" stroke-width="1" stroke-linecap="round" stroke-linejoin="round"/><path d="M4.4 1.6 H8.6" stroke="#8a8a8a" stroke-width="1"/></svg>
<svg style="position:absolute;left:917.9px;top:514.3px;" width="9.8" height="9.8" viewBox="0 0 9.8 9.8" fill="none"><circle cx="4.9" cy="4.9" r="4.3" stroke="#8a8a8a" stroke-width=".9"/><path d="M4.9 4.2 V7.2 M3.9 7.3 H5.9 M4.1 4.2 H4.9" stroke="#8a8a8a" stroke-width=".9"/><circle cx="4.9" cy="2.6" r=".6" fill="#8a8a8a"/></svg>
<svg style="position:absolute;left:327.2px;top:538.8px;" width="5.7" height="9.6" viewBox="0 0 5.7 9.6" fill="none"><path d="M0.6 0.5 L5.0 4.8 L0.6 9.1" stroke="#587ca6" stroke-width="1.5" stroke-linecap="round" stroke-linejoin="round"/></svg>
<svg style="position:absolute;left:869.9px;top:534.7px;" width="12.4" height="12.4" viewBox="0 0 12.4 12.4" fill="none"><path d="M1.1 11.5 L1.6 8.4 L8.8 1.2 A1 1 0 0 1 10.2 1.2 L11.3 2.3 A1 1 0 0 1 11.3 3.7 L4.1 10.9 Z" stroke="#7a7a7a" stroke-width="1" stroke-linejoin="round"/><path d="M7.5 2.6 L9.9 5" stroke="#7a7a7a" stroke-width="0.9"/></svg>
<svg style="position:absolute;left:869.9px;top:553.8px;" width="13" height="13" viewBox="0 0 13 13" fill="none"><circle cx="6.5" cy="6.5" r="5.8" stroke="#8a8a8a" stroke-width="1.2"/><path d="M6.5 3 V6.6 L8.6 8.8" stroke="#8a8a8a" stroke-width="1" stroke-linecap="round" stroke-linejoin="round"/><path d="M4.4 1.6 H8.6" stroke="#8a8a8a" stroke-width="1"/></svg>
<svg style="position:absolute;left:917.9px;top:555.3px;" width="9.8" height="9.8" viewBox="0 0 9.8 9.8" fill="none"><circle cx="4.9" cy="4.9" r="4.3" stroke="#8a8a8a" stroke-width=".9"/><path d="M4.9 4.2 V7.2 M3.9 7.3 H5.9 M4.1 4.2 H4.9" stroke="#8a8a8a" stroke-width=".9"/><circle cx="4.9" cy="2.6" r=".6" fill="#8a8a8a"/></svg>
<svg style="position:absolute;left:327.2px;top:579.8px;" width="5.7" height="9.6" viewBox="0 0 5.7 9.6" fill="none"><path d="M0.6 0.5 L5.0 4.8 L0.6 9.1" stroke="#587ca6" stroke-width="1.5" stroke-linecap="round" stroke-linejoin="round"/></svg>
<svg style="position:absolute;left:869.9px;top:575.7px;" width="12.4" height="12.4" viewBox="0 0 12.4 12.4" fill="none"><path d="M1.1 11.5 L1.6 8.4 L8.8 1.2 A1 1 0 0 1 10.2 1.2 L11.3 2.3 A1 1 0 0 1 11.3 3.7 L4.1 10.9 Z" stroke="#7a7a7a" stroke-width="1" stroke-linejoin="round"/><path d="M7.5 2.6 L9.9 5" stroke="#7a7a7a" stroke-width="0.9"/></svg>
<svg style="position:absolute;left:869.9px;top:594.8px;" width="13" height="13" viewBox="0 0 13 13" fill="none"><circle cx="6.5" cy="6.5" r="5.8" stroke="#8a8a8a" stroke-width="1.2"/><path d="M6.5 3 V6.6 L8.6 8.8" stroke="#8a8a8a" stroke-width="1" stroke-linecap="round" stroke-linejoin="round"/><path d="M4.4 1.6 H8.6" stroke="#8a8a8a" stroke-width="1"/></svg>
<svg style="position:absolute;left:917.9px;top:596.3px;" width="9.8" height="9.8" viewBox="0 0 9.8 9.8" fill="none"><circle cx="4.9" cy="4.9" r="4.3" stroke="#8a8a8a" stroke-width=".9"/><path d="M4.9 4.2 V7.2 M3.9 7.3 H5.9 M4.1 4.2 H4.9" stroke="#8a8a8a" stroke-width=".9"/><circle cx="4.9" cy="2.6" r=".6" fill="#8a8a8a"/></svg>
<svg style="position:absolute;left:327.2px;top:620.8px;" width="5.7" height="9.6" viewBox="0 0 5.7 9.6" fill="none"><path d="M0.6 0.5 L5.0 4.8 L0.6 9.1" stroke="#587ca6" stroke-width="1.5" stroke-linecap="round" stroke-linejoin="round"/></svg>
<svg style="position:absolute;left:869.9px;top:616.7px;" width="12.4" height="12.4" viewBox="0 0 12.4 12.4" fill="none"><path d="M1.1 11.5 L1.6 8.4 L8.8 1.2 A1 1 0 0 1 10.2 1.2 L11.3 2.3 A1 1 0 0 1 11.3 3.7 L4.1 10.9 Z" stroke="#7a7a7a" stroke-width="1" stroke-linejoin="round"/><path d="M7.5 2.6 L9.9 5" stroke="#7a7a7a" stroke-width="0.9"/></svg>
<svg style="position:absolute;left:869.9px;top:635.8px;" width="13" height="13" viewBox="0 0 13 13" fill="none"><circle cx="6.5" cy="6.5" r="5.8" stroke="#8a8a8a" stroke-width="1.2"/><path d="M6.5 3 V6.6 L8.6 8.8" stroke="#8a8a8a" stroke-width="1" stroke-linecap="round" stroke-linejoin="round"/><path d="M4.4 1.6 H8.6" stroke="#8a8a8a" stroke-width="1"/></svg>
<svg style="position:absolute;left:917.9px;top:637.3px;" width="9.8" height="9.8" viewBox="0 0 9.8 9.8" fill="none"><circle cx="4.9" cy="4.9" r="4.3" stroke="#8a8a8a" stroke-width=".9"/><path d="M4.9 4.2 V7.2 M3.9 7.3 H5.9 M4.1 4.2 H4.9" stroke="#8a8a8a" stroke-width=".9"/><circle cx="4.9" cy="2.6" r=".6" fill="#8a8a8a"/></svg>
<span class="t" style="left:41.3px;top:48.00px;font-size:13px;line-height:13px;color:#333;-webkit-text-stroke:0.24499999999999997px #333;transform:scaleX(1.0392);">Dashboard</span>
<span class="t" style="left:23.2px;top:69.00px;font-size:13px;line-height:13px;color:#333;-webkit-text-stroke:0.24499999999999997px #333;transform:scaleX(1.0680);">Infrastructure</span>
<span class="t" style="left:51.3px;top:91.00px;font-size:13px;line-height:13px;color:#5a5a5a;transform:scaleX(0.9972);">Site Pairing</span>
<span class="t" style="left:50.8px;top:113.00px;font-size:13px;line-height:13px;color:#5a5a5a;transform:scaleX(1.0553);">Interconnect</span>
<span class="t" style="left:23.9px;top:135.00px;font-size:13px;line-height:13px;color:#333;-webkit-text-stroke:0.24499999999999997px #333;transform:scaleX(1.0048);">Services</span>
<span class="t" style="left:53.3px;top:157.00px;font-size:13px;line-height:13px;color:#5a5a5a;transform:scaleX(1.0398);">Network Extension</span>
<span class="t" style="left:53.3px;top:178.00px;font-size:13px;line-height:13px;color:#5a5a5a;transform:scaleX(1.0324);">Migration</span>
<span class="t" style="left:52.4px;top:201.00px;font-size:13px;line-height:13px;color:#5a5a5a;transform:scaleX(1.0084);">Disaster Recovery</span>
<span class="t" style="left:23.9px;top:222.00px;font-size:13px;line-height:13px;color:#333;-webkit-text-stroke:0.24499999999999997px #333;transform:scaleX(1.0646);">Administration</span>
<span class="t" style="left:52.2px;top:243.00px;font-size:13px;line-height:13px;color:#5a5a5a;transform:scaleX(1.0307);">System Updates</span>
<span class="t" style="left:52.2px;top:265.00px;font-size:13px;line-height:13px;color:#5a5a5a;transform:scaleX(1.0523);">Troubleshooting</span>
<span class="t" style="left:52.2px;top:289.00px;font-size:13px;line-height:13px;color:#5a5a5a;transform:scaleX(1.0515);">Audit Logs</span>
<span class="t" style="left:52.2px;top:311.00px;font-size:13px;line-height:13px;color:#5a5a5a;transform:scaleX(1.0632);">Activity Logs</span>
<span class="t" style="left:52.2px;top:334.00px;font-size:13px;line-height:13px;color:#5a5a5a;transform:scaleX(0.9078);">DICE</span>
<span class="t" style="left:49.9px;top:357.00px;font-size:13px;line-height:13px;color:#5a5a5a;transform:scaleX(1.0626);">Support</span>
<span class="t" style="left:314.2px;top:48.00px;font-size:16px;line-height:16px;color:#2b2b2b;transform:scaleX(1.0560);">Migration</span>
<span class="t" style="left:297.2px;top:90.00px;font-size:13px;line-height:13px;color:#b4b4b4;transform:scaleX(1.0289);">Tracking</span>
<span class="t" style="left:396.9px;top:90.00px;font-size:13px;line-height:13px;color:#333;-webkit-text-stroke:0.3px #333;transform:scaleX(1.0186);">Management</span>
<span class="t" style="left:547.6px;top:91.00px;font-size:9.6px;line-height:9.6px;color:#3f6c96;font-weight:bold;transform:scaleX(0.9910);letter-spacing:.7px;">MIGRATE</span>
<span class="t" style="left:1403.8px;top:93.00px;font-size:12.5px;line-height:12.5px;color:#c9c9c9;transform:scaleX(0.9392);">Search</span>
<span class="t" style="left:279.9px;top:151.00px;font-size:11px;line-height:11px;color:#666;font-weight:bold;transform:scaleX(0.9343);">Name</span>
<span class="t" style="left:587.5px;top:151.00px;font-size:11px;line-height:11px;color:#666;font-weight:bold;transform:scaleX(0.9906);">VMs/ Storage/ Memory/ CPUs</span>
<span class="t" style="left:873.2px;top:151.00px;font-size:11px;line-height:11px;color:#666;font-weight:bold;transform:scaleX(0.9287);">Progress</span>
<span class="t" style="left:1115.6px;top:151.00px;font-size:11px;line-height:11px;color:#666;font-weight:bold;transform:scaleX(0.9656);">Start</span>
<span class="t" style="left:1261.1px;top:151.00px;font-size:11px;line-height:11px;color:#666;font-weight:bold;transform:scaleX(0.9143);">End</span>
<span class="t" style="left:1403.8px;top:151.00px;font-size:11px;line-height:11px;color:#666;font-weight:bold;transform:scaleX(0.9428);">Status</span>
<span class="t" style="left:320.0px;top:192.00px;font-size:14.5px;line-height:14.5px;color:#eaf4fb;transform:scaleX(1.0743);">sc-rdops-vm11-dhcp-70-80.eng.vmware.com</span>
<span class="t" style="left:691.2px;top:191.00px;font-size:15px;line-height:15px;color:#eaf4fb;transform:scaleX(0.9283);">10.185.224.178</span>
<span class="t" style="left:302.6px;top:231.00px;font-size:11px;line-height:11px;color:#444;font-weight:bold;transform:scaleX(0.9829);">2021-06-02 20:52 UZL3</span>
<span class="t" style="left:530.3px;top:229.00px;font-size:8.5px;line-height:8.5px;color:#8a8a8a;transform:scaleX(0.8750);">DRAFT</span>
<span class="t" style="left:562.6999999999999px;top:231.00px;font-size:6px;line-height:6px;color:#f2f2f2;font-weight:bold;transform:scaleX(1.0766);">4</span>
<span class="t" style="left:615.3px;top:226.00px;font-size:11px;line-height:11px;color:#444;font-weight:bold;transform:scaleX(0.9306);">4</span>
<span class="t" style="left:624.6px;top:229.00px;font-size:8px;line-height:8px;color:#a8a8a8;transform:scaleX(1.0294);">/</span>
<span class="t" style="left:648.0px;top:226.00px;font-size:11px;line-height:11px;color:#666;transform:scaleX(0.9619);">48 GB</span>
<span class="t" style="left:681.8px;top:229.00px;font-size:8px;line-height:8px;color:#a8a8a8;transform:scaleX(1.0294);">/</span>
<span class="t" style="left:710.7px;top:226.00px;font-size:11px;line-height:11px;color:#666;transform:scaleX(0.9809);">2 GB</span>
<span class="t" style="left:739.0px;top:229.00px;font-size:8px;line-height:8px;color:#a8a8a8;transform:scaleX(1.0294);">/</span>
<span class="t" style="left:754.3px;top:226.00px;font-size:11px;line-height:11px;color:#666;transform:scaleX(0.9306);">4</span>
<span class="t" style="left:886.0px;top:227.00px;font-size:11px;line-height:11px;color:#606060;transform:scaleX(0.9646);">Draft</span>
<span class="t" style="left:346.7px;top:262.00px;font-size:16px;line-height:16px;color:#555;transform:scaleX(0.9656);">0</span>
<span class="t" style="left:358.3px;top:266.00px;font-size:11px;line-height:11px;color:#7a7a7a;transform:scaleX(0.9935);">/ 4 selected</span>
<span class="t" style="left:952.5px;top:265.00px;font-size:10px;line-height:10px;color:#c6c6c4;font-weight:bold;transform:scaleX(0.9767);">GO</span>
<span class="t" style="left:1015.1px;top:265.00px;font-size:10px;line-height:10px;color:#c9c9c9;font-weight:bold;transform:scaleX(0.9282);letter-spacing:.8px;">SCHEDULE</span>
<span class="t" style="left:1119.8px;top:265.00px;font-size:10px;line-height:10px;color:#c9c9c9;font-weight:bold;transform:scaleX(0.9189);letter-spacing:.8px;">CANCEL</span>
<span class="t" style="left:1209.8px;top:265.00px;font-size:10px;line-height:10px;color:#c9c9c9;font-weight:bold;transform:scaleX(0.9208);letter-spacing:.8px;">ARCHIVE</span>
<span class="t" style="left:1304.5px;top:265.00px;font-size:10px;line-height:10px;color:#c9c9c9;font-weight:bold;transform:scaleX(0.9366);letter-spacing:.8px;">FORCE CLEANUP</span>
<span class="t" style="left:1443.5px;top:265.00px;font-size:10px;line-height:10px;color:#c9c9c9;font-weight:bold;transform:scaleX(0.9478);letter-spacing:.8px;">FORCE POWER-OFF</span>
<span class="t" style="left:276.4px;top:288.00px;font-size:9px;line-height:9px;color:#858585;font-weight:bold;transform:scaleX(0.8782);">1.</span>
<span class="t" style="left:339.2px;top:293.00px;font-size:11px;line-height:11px;color:#5e5e5e;transform:scaleX(1.0010);">VM-May-31-21-suse-test-vm</span>
<span class="t" style="left:511.8px;top:293.00px;font-size:8.5px;line-height:8.5px;color:#8a8a8a;transform:scaleX(0.9208);">DRAFT</span>
<span class="t" style="left:553.1px;top:294.00px;font-size:8px;line-height:8px;color:#fff;font-weight:bold;transform:scaleX(0.8130);">Bulk</span>
<span class="t" style="left:648.6px;top:290.00px;font-size:11px;line-height:11px;color:#666;transform:scaleX(0.9427);">12 GB</span>
<span class="t" style="left:681.8px;top:293.00px;font-size:8px;line-height:8px;color:#a8a8a8;transform:scaleX(1.0294);">/</span>
<span class="t" style="left:697.6px;top:290.00px;font-size:11px;line-height:11px;color:#666;transform:scaleX(0.9941);">512 MB</span>
<span class="t" style="left:739.0px;top:293.00px;font-size:8px;line-height:8px;color:#a8a8a8;transform:scaleX(1.0294);">/</span>
<span class="t" style="left:754.2px;top:290.00px;font-size:11px;line-height:11px;color:#666;">1</span>
<span class="t" style="left:886.0px;top:294.00px;font-size:11px;line-height:11px;color:#606060;transform:scaleX(0.9646);">Draft</span>
<span class="t" style="left:1111.8px;top:290.00px;font-size:11px;line-height:11px;color:#555;transform:scaleX(0.9771);">08:52</span>
<span class="t" style="left:1142.2px;top:292.00px;font-size:8.5px;line-height:8.5px;color:#555;transform:scaleX(1.0118);">PM</span>
<span class="t" style="left:1111.8px;top:304.00px;font-size:9px;line-height:9px;color:#555;transform:scaleX(0.9487);">Jun 2</span>
<span class="t" style="left:276.4px;top:322.00px;font-size:9px;line-height:9px;color:#858585;font-weight:bold;transform:scaleX(0.8782);">2.</span>
<span class="t" style="left:339.2px;top:327.00px;font-size:11px;line-height:11px;color:#5e5e5e;transform:scaleX(1.0010);">VM-May-31-22-suse-test-vm</span>
<span class="t" style="left:511.8px;top:327.00px;font-size:8.5px;line-height:8.5px;color:#8a8a8a;transform:scaleX(0.9208);">DRAFT</span>
<span class="t" style="left:553.1px;top:328.00px;font-size:8px;line-height:8px;color:#fff;font-weight:bold;transform:scaleX(0.8130);">Bulk</span>
<span class="t" style="left:648.6px;top:324.00px;font-size:11px;line-height:11px;color:#666;transform:scaleX(0.9427);">12 GB</span>
<span class="t" style="left:681.8px;top:327.00px;font-size:8px;line-height:8px;color:#a8a8a8;transform:scaleX(1.0294);">/</span>
<span class="t" style="left:697.6px;top:324.00px;font-size:11px;line-height:11px;color:#666;transform:scaleX(0.9941);">512 MB</span>
<span class="t" style="left:739.0px;top:327.00px;font-size:8px;line-height:8px;color:#a8a8a8;transform:scaleX(1.0294);">/</span>
<span class="t" style="left:754.2px;top:324.00px;font-size:11px;line-height:11px;color:#666;">1</span>
<span class="t" style="left:886.0px;top:328.00px;font-size:11px;line-height:11px;color:#606060;transform:scaleX(0.9646);">Draft</span>
<span class="t" style="left:1111.8px;top:324.00px;font-size:11px;line-height:11px;color:#555;transform:scaleX(0.9771);">08:52</span>
<span class="t" style="left:1142.2px;top:326.00px;font-size:8.5px;line-height:8.5px;color:#555;transform:scaleX(1.0118);">PM</span>
<span class="t" style="left:1111.8px;top:338.00px;font-size:9px;line-height:9px;color:#555;transform:scaleX(0.9487);">Jun 2</span>
<span class="t" style="left:276.4px;top:356.00px;font-size:9px;line-height:9px;color:#858585;font-weight:bold;transform:scaleX(0.8782);">3.</span>
<span class="t" style="left:339.2px;top:361.00px;font-size:11px;line-height:11px;color:#5e5e5e;transform:scaleX(1.0010);">VM-May-31-23-suse-test-vm</span>
<span class="t" style="left:511.8px;top:361.00px;font-size:8.5px;line-height:8.5px;color:#8a8a8a;transform:scaleX(0.9208);">DRAFT</span>
<span class="t" style="left:553.1px;top:362.00px;font-size:8px;line-height:8px;color:#fff;font-weight:bold;transform:scaleX(0.8130);">Bulk</span>
<span class="t" style="left:648.6px;top:358.00px;font-size:11px;line-height:11px;color:#666;transform:scaleX(0.9427);">12 GB</span>
<span class="t" style="left:681.8px;top:361.00px;font-size:8px;line-height:8px;color:#a8a8a8;transform:scaleX(1.0294);">/</span>
<span class="t" style="left:697.6px;top:358.00px;font-size:11px;line-height:11px;color:#666;transform:scaleX(0.9941);">512 MB</span>
<span class="t" style="left:739.0px;top:361.00px;font-size:8px;line-height:8px;color:#a8a8a8;transform:scaleX(1.0294);">/</span>
<span class="t" style="left:754.2px;top:358.00px;font-size:11px;line-height:11px;color:#666;">1</span>
<span class="t" style="left:886.0px;top:362.00px;font-size:11px;line-height:11px;color:#606060;transform:scaleX(0.9646);">Draft</span>
<span class="t" style="left:1111.8px;top:358.00px;font-size:11px;line-height:11px;color:#555;transform:scaleX(0.9771);">08:52</span>
<span class="t" style="left:1142.2px;top:360.00px;font-size:8.5px;line-height:8.5px;color:#555;transform:scaleX(1.0118);">PM</span>
<span class="t" style="left:1111.8px;top:372.00px;font-size:9px;line-height:9px;color:#555;transform:scaleX(0.9487);">Jun 2</span>
<span class="t" style="left:276.4px;top:390.00px;font-size:9px;line-height:9px;color:#858585;font-weight:bold;transform:scaleX(0.8782);">4.</span>
<span class="t" style="left:339.2px;top:395.00px;font-size:11px;line-height:11px;color:#5e5e5e;transform:scaleX(1.0010);">VM-May-31-24-suse-test-vm</span>
<span class="t" style="left:511.8px;top:395.00px;font-size:8.5px;line-height:8.5px;color:#8a8a8a;transform:scaleX(0.9208);">DRAFT</span>
<span class="t" style="left:553.1px;top:396.00px;font-size:8px;line-height:8px;color:#fff;font-weight:bold;transform:scaleX(0.8130);">Bulk</span>
<span class="t" style="left:648.6px;top:392.00px;font-size:11px;line-height:11px;color:#666;transform:scaleX(0.9427);">12 GB</span>
<span class="t" style="left:681.8px;top:395.00px;font-size:8px;line-height:8px;color:#a8a8a8;transform:scaleX(1.0294);">/</span>
<span class="t" style="left:697.6px;top:392.00px;font-size:11px;line-height:11px;color:#666;transform:scaleX(0.9941);">512 MB</span>
<span class="t" style="left:739.0px;top:395.00px;font-size:8px;line-height:8px;color:#a8a8a8;transform:scaleX(1.0294);">/</span>
<span class="t" style="left:754.2px;top:392.00px;font-size:11px;line-height:11px;color:#666;">1</span>
<span class="t" style="left:886.0px;top:396.00px;font-size:11px;line-height:11px;color:#606060;transform:scaleX(0.9646);">Draft</span>
<span class="t" style="left:1111.8px;top:392.00px;font-size:11px;line-height:11px;color:#555;transform:scaleX(0.9771);">08:52</span>
<span class="t" style="left:1142.2px;top:394.00px;font-size:8.5px;line-height:8.5px;color:#555;transform:scaleX(1.0118);">PM</span>
<span class="t" style="left:1111.8px;top:406.00px;font-size:9px;line-height:9px;color:#555;transform:scaleX(0.9487);">Jun 2</span>
<span class="t" style="left:302.6px;top:435.00px;font-size:11px;line-height:11px;color:#444;font-weight:bold;transform:scaleX(0.9642);">Get predictions</span>
<span class="t" style="left:530.3px;top:434.00px;font-size:8.5px;line-height:8.5px;color:#8a8a8a;transform:scaleX(0.8750);">DRAFT</span>
<span class="t" style="left:562.6999999999999px;top:435.00px;font-size:6px;line-height:6px;color:#f2f2f2;font-weight:bold;transform:scaleX(1.0766);">4</span>
<span class="t" style="left:615.3px;top:431.00px;font-size:11px;line-height:11px;color:#444;font-weight:bold;transform:scaleX(0.9306);">4</span>
<span class="t" style="left:624.6px;top:434.00px;font-size:8px;line-height:8px;color:#a8a8a8;transform:scaleX(1.0294);">/</span>
<span class="t" style="left:648.0px;top:431.00px;font-size:11px;line-height:11px;color:#666;transform:scaleX(0.9619);">30 GB</span>
<span class="t" style="left:681.8px;top:434.00px;font-size:8px;line-height:8px;color:#a8a8a8;transform:scaleX(1.0294);">/</span>
<span class="t" style="left:710.7px;top:431.00px;font-size:11px;line-height:11px;color:#666;transform:scaleX(0.9809);">2 GB</span>
<span class="t" style="left:739.0px;top:434.00px;font-size:8px;line-height:8px;color:#a8a8a8;transform:scaleX(1.0294);">/</span>
<span class="t" style="left:754.3px;top:431.00px;font-size:11px;line-height:11px;color:#666;transform:scaleX(0.9306);">4</span>
<span class="t" style="left:886.0px;top:432.00px;font-size:11px;line-height:11px;color:#606060;transform:scaleX(0.9646);">Draft</span>
<span class="t" style="left:346.7px;top:466.00px;font-size:16px;line-height:16px;color:#555;transform:scaleX(0.9656);">0</span>
<span class="t" style="left:358.3px;top:470.00px;font-size:11px;line-height:11px;color:#7a7a7a;transform:scaleX(0.9935);">/ 4 selected</span>
<span class="t" style="left:952.5px;top:469.00px;font-size:10px;line-height:10px;color:#c6c6c4;font-weight:bold;transform:scaleX(0.9767);">GO</span>
<span class="t" style="left:1015.1px;top:469.00px;font-size:10px;line-height:10px;color:#c9c9c9;font-weight:bold;transform:scaleX(0.9282);letter-spacing:.8px;">SCHEDULE</span>
<span class="t" style="left:1119.8px;top:469.00px;font-size:10px;line-height:10px;color:#c9c9c9;font-weight:bold;transform:scaleX(0.9189);letter-spacing:.8px;">CANCEL</span>
<span class="t" style="left:1209.8px;top:469.00px;font-size:10px;line-height:10px;color:#c9c9c9;font-weight:bold;transform:scaleX(0.9208);letter-spacing:.8px;">ARCHIVE</span>
<span class="t" style="left:1304.5px;top:469.00px;font-size:10px;line-height:10px;color:#c9c9c9;font-weight:bold;transform:scaleX(0.9366);letter-spacing:.8px;">FORCE CLEANUP</span>
<span class="t" style="left:1443.5px;top:469.00px;font-size:10px;line-height:10px;color:#c9c9c9;font-weight:bold;transform:scaleX(0.9478);letter-spacing:.8px;">FORCE POWER-OFF</span>
<span class="t" style="left:276.4px;top:493.00px;font-size:9px;line-height:9px;color:#858585;font-weight:bold;transform:scaleX(0.8782);">1.</span>
<span class="t" style="left:339.2px;top:498.00px;font-size:11px;line-height:11px;color:#5e5e5e;transform:scaleX(1.0049);">VM-May-31-2-suse-test-vm</span>
<span class="t" style="left:511.8px;top:497.00px;font-size:8.5px;line-height:8.5px;color:#8a8a8a;transform:scaleX(0.9208);">DRAFT</span>
<span class="t" style="left:553.1px;top:498.00px;font-size:8px;line-height:8px;color:#fff;font-weight:bold;transform:scaleX(0.8130);">Bulk</span>
<span class="t" style="left:648.6px;top:494.00px;font-size:11px;line-height:11px;color:#666;transform:scaleX(0.9427);">12 GB</span>
<span class="t" style="left:681.8px;top:497.00px;font-size:8px;line-height:8px;color:#a8a8a8;transform:scaleX(1.0294);">/</span>
<span class="t" style="left:697.6px;top:494.00px;font-size:11px;line-height:11px;color:#666;transform:scaleX(0.9941);">512 MB</span>
<span class="t" style="left:739.0px;top:497.00px;font-size:8px;line-height:8px;color:#a8a8a8;transform:scaleX(1.0294);">/</span>
<span class="t" style="left:754.2px;top:494.00px;font-size:11px;line-height:11px;color:#666;">1</span>
<span class="t" style="left:886.0px;top:495.00px;font-size:11px;line-height:11px;color:#606060;transform:scaleX(0.9646);">Draft</span>
<span class="t" style="left:1111.8px;top:494.00px;font-size:11px;line-height:11px;color:#555;transform:scaleX(0.9771);">07:12</span>
<span class="t" style="left:1142.2px;top:496.00px;font-size:8.5px;line-height:8.5px;color:#555;transform:scaleX(1.0118);">PM</span>
<span class="t" style="left:1111.8px;top:509.00px;font-size:9px;line-height:9px;color:#555;transform:scaleX(0.9487);">Jun 2</span>
<span class="t" style="left:886.5px;top:513.00px;font-size:10.5px;line-height:10.5px;color:#666;transform:scaleX(1.0206);">51min</span>
<span class="t" style="left:276.4px;top:534.00px;font-size:9px;line-height:9px;color:#858585;font-weight:bold;transform:scaleX(0.8782);">2.</span>
<span class="t" style="left:339.2px;top:539.00px;font-size:11px;line-height:11px;color:#5e5e5e;transform:scaleX(1.0102);">VM-May-31-2-win-test-vm</span>
<span class="t" style="left:511.8px;top:538.00px;font-size:8.5px;line-height:8.5px;color:#8a8a8a;transform:scaleX(0.9208);">DRAFT</span>
<span class="t" style="left:553.1px;top:539.00px;font-size:8px;line-height:8px;color:#fff;font-weight:bold;transform:scaleX(0.8130);">Bulk</span>
<span class="t" style="left:653.8px;top:535.00px;font-size:11px;line-height:11px;color:#666;transform:scaleX(0.9650);">3 GB</span>
<span class="t" style="left:681.8px;top:538.00px;font-size:8px;line-height:8px;color:#a8a8a8;transform:scaleX(1.0294);">/</span>
<span class="t" style="left:697.6px;top:535.00px;font-size:11px;line-height:11px;color:#666;transform:scaleX(0.9941);">512 MB</span>
<span class="t" style="left:739.0px;top:538.00px;font-size:8px;line-height:8px;color:#a8a8a8;transform:scaleX(1.0294);">/</span>
<span class="t" style="left:754.2px;top:535.00px;font-size:11px;line-height:11px;color:#666;">1</span>
<span class="t" style="left:886.0px;top:536.00px;font-size:11px;line-height:11px;color:#606060;transform:scaleX(0.9646);">Draft</span>
<span class="t" style="left:1111.8px;top:535.00px;font-size:11px;line-height:11px;color:#555;transform:scaleX(0.9771);">07:12</span>
<span class="t" style="left:1142.2px;top:537.00px;font-size:8.5px;line-height:8.5px;color:#555;transform:scaleX(1.0118);">PM</span>
<span class="t" style="left:1111.8px;top:550.00px;font-size:9px;line-height:9px;color:#555;transform:scaleX(0.9487);">Jun 2</span>
<span class="t" style="left:886.5px;top:554.00px;font-size:10.5px;line-height:10.5px;color:#666;transform:scaleX(1.0206);">32min</span>
<span class="t" style="left:276.4px;top:575.00px;font-size:9px;line-height:9px;color:#858585;font-weight:bold;transform:scaleX(0.8782);">3.</span>
<span class="t" style="left:339.2px;top:580.00px;font-size:11px;line-height:11px;color:#5e5e5e;transform:scaleX(1.0046);">VM-May-31-20-suse-test-vm</span>
<span class="t" style="left:511.8px;top:579.00px;font-size:8.5px;line-height:8.5px;color:#8a8a8a;transform:scaleX(0.9208);">DRAFT</span>
<span class="t" style="left:553.1px;top:580.00px;font-size:8px;line-height:8px;color:#fff;font-weight:bold;transform:scaleX(0.8130);">Bulk</span>
<span class="t" style="left:648.6px;top:576.00px;font-size:11px;line-height:11px;color:#666;transform:scaleX(0.9427);">12 GB</span>
<span class="t" style="left:681.8px;top:579.00px;font-size:8px;line-height:8px;color:#a8a8a8;transform:scaleX(1.0294);">/</span>
<span class="t" style="left:697.6px;top:576.00px;font-size:11px;line-height:11px;color:#666;transform:scaleX(0.9941);">512 MB</span>
<span class="t" style="left:739.0px;top:579.00px;font-size:8px;line-height:8px;color:#a8a8a8;transform:scaleX(1.0294);">/</span>
<span class="t" style="left:754.2px;top:576.00px;font-size:11px;line-height:11px;color:#666;">1</span>
<span class="t" style="left:886.0px;top:577.00px;font-size:11px;line-height:11px;color:#606060;transform:scaleX(0.9646);">Draft</span>
<span class="t" style="left:1111.8px;top:576.00px;font-size:11px;line-height:11px;color:#555;transform:scaleX(0.9771);">07:12</span>
<span class="t" style="left:1142.2px;top:578.00px;font-size:8.5px;line-height:8.5px;color:#555;transform:scaleX(1.0118);">PM</span>
<span class="t" style="left:1111.8px;top:591.00px;font-size:9px;line-height:9px;color:#555;transform:scaleX(0.9487);">Jun 2</span>
<span class="t" style="left:886.5px;top:595.00px;font-size:10.5px;line-height:10.5px;color:#666;transform:scaleX(1.0206);">50min</span>
<span class="t" style="left:276.4px;top:616.00px;font-size:9px;line-height:9px;color:#858585;font-weight:bold;transform:scaleX(0.8782);">4.</span>
<span class="t" style="left:339.2px;top:621.00px;font-size:11px;line-height:11px;color:#5e5e5e;transform:scaleX(1.0102);">VM-May-31-3-win-test-vm</span>
<span class="t" style="left:511.8px;top:620.00px;font-size:8.5px;line-height:8.5px;color:#8a8a8a;transform:scaleX(0.9208);">DRAFT</span>
<span class="t" style="left:553.1px;top:621.00px;font-size:8px;line-height:8px;color:#fff;font-weight:bold;transform:scaleX(0.8130);">Bulk</span>
<span class="t" style="left:653.8px;top:617.00px;font-size:11px;line-height:11px;color:#666;transform:scaleX(0.9650);">3 GB</span>
<span class="t" style="left:681.8px;top:620.00px;font-size:8px;line-height:8px;color:#a8a8a8;transform:scaleX(1.0294);">/</span>
<span class="t" style="left:697.6px;top:617.00px;font-size:11px;line-height:11px;color:#666;transform:scaleX(0.9941);">512 MB</span>
<span class="t" style="left:739.0px;top:620.00px;font-size:8px;line-height:8px;color:#a8a8a8;transform:scaleX(1.0294);">/</span>
<span class="t" style="left:754.2px;top:617.00px;font-size:11px;line-height:11px;color:#666;">1</span>
<span class="t" style="left:886.0px;top:618.00px;font-size:11px;line-height:11px;color:#606060;transform:scaleX(0.9646);">Draft</span>
<span class="t" style="left:1111.8px;top:617.00px;font-size:11px;line-height:11px;color:#555;transform:scaleX(0.9771);">07:12</span>
<span class="t" style="left:1142.2px;top:619.00px;font-size:8.5px;line-height:8.5px;color:#555;transform:scaleX(1.0118);">PM</span>
<span class="t" style="left:1111.8px;top:632.00px;font-size:9px;line-height:9px;color:#555;transform:scaleX(0.9487);">Jun 2</span>
<span class="t" style="left:886.5px;top:636.00px;font-size:10.5px;line-height:10.5px;color:#666;transform:scaleX(1.0206);">32min</span>
<svg style="position:absolute;left:808px;top:306px" width="16" height="20" viewBox="0 0 16 20"><path d="M3 2.2 V16.2 L6.3 13.4 L8.3 17.9 L11.4 16.7 L9.5 12.5 H13.4 Z" fill="#000" stroke="#fff" stroke-width=".9" stroke-linejoin="round"/></svg>
</div></body></html>
